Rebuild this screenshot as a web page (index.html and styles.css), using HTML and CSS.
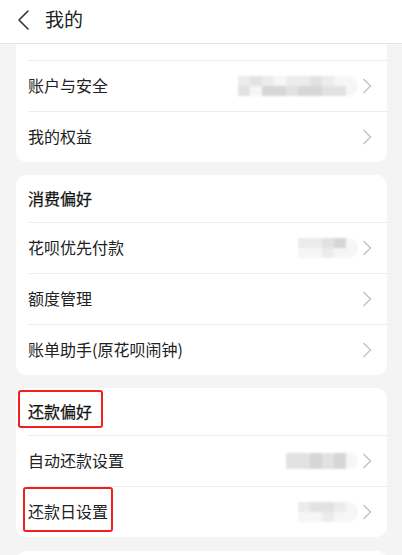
FILE: index.html
```html
<!DOCTYPE html>
<html lang="zh-CN">
<head>
<meta charset="utf-8">
<link rel="stylesheet" href="styles.css">
</head>
<body>
<div class="header">
  <svg class="back" width="14" height="22" viewBox="0 0 14 22"><polyline points="11,2 2,11 11,20" fill="none" stroke="#333" stroke-width="1.6" stroke-linecap="round" stroke-linejoin="round"/></svg>
  <span class="title">我的</span>
</div>
<div class="content">
  <div class="card card-cut">
    <div class="stub"></div>
    <div class="row"><span class="label">账户与安全</span>
      <div class="blob blob-w10"><i class="g1"></i><i class="g2"></i><i class="g1"></i><i class="g0"></i><i class="g1"></i><i class="g1"></i><i class="g2"></i><i class="g1"></i><i class="g0"></i><i class="g0"></i><i class="g2"></i><i class="g0"></i><i class="g3"></i><i class="g3"></i><i class="g2"></i><i class="g3"></i><i class="g3"></i><i class="g2"></i><i class="g2"></i><i class="g0"></i></div>
      <svg class="chev" width="10" height="16" viewBox="0 0 10 16"><polyline points="1.5,1 8.5,8 1.5,15" fill="none" stroke="#c2c2c2" stroke-width="1.4"/></svg>
    </div>
    <div class="row"><span class="label">我的权益</span>
      <svg class="chev" width="10" height="16" viewBox="0 0 10 16"><polyline points="1.5,1 8.5,8 1.5,15" fill="none" stroke="#c2c2c2" stroke-width="1.4"/></svg>
    </div>
  </div>

  <div class="card">
    <div class="row head"><span class="label">消费偏好</span></div>
    <div class="row"><span class="label">花呗优先付款</span>
      <div class="blob blob-w5"><i class="g1"></i><i class="g1"></i><i class="g2"></i><i class="g3"></i><i class="g0"></i><i class="g0"></i><i class="g0"></i><i class="g1"></i><i class="g0"></i><i class="g0"></i></div>
      <svg class="chev" width="10" height="16" viewBox="0 0 10 16"><polyline points="1.5,1 8.5,8 1.5,15" fill="none" stroke="#c2c2c2" stroke-width="1.4"/></svg>
    </div>
    <div class="row"><span class="label">额度管理</span>
      <svg class="chev" width="10" height="16" viewBox="0 0 10 16"><polyline points="1.5,1 8.5,8 1.5,15" fill="none" stroke="#c2c2c2" stroke-width="1.4"/></svg>
    </div>
    <div class="row"><span class="label">账单助手(原花呗闹钟)</span>
      <svg class="chev" width="10" height="16" viewBox="0 0 10 16"><polyline points="1.5,1 8.5,8 1.5,15" fill="none" stroke="#c2c2c2" stroke-width="1.4"/></svg>
    </div>
  </div>

  <div class="card">
    <div class="row head"><span class="label marked mark1">还款偏好</span></div>
    <div class="row"><span class="label">自动还款设置</span>
      <div class="blob blob-w6 blob-thin"><i class="g2"></i><i class="g2"></i><i class="g3"></i><i class="g2"></i><i class="g3"></i><i class="g0"></i></div>
      <svg class="chev" width="10" height="16" viewBox="0 0 10 16"><polyline points="1.5,1 8.5,8 1.5,15" fill="none" stroke="#c2c2c2" stroke-width="1.4"/></svg>
    </div>
    <div class="row"><span class="label marked mark2">还款日设置</span>
      <div class="blob blob-w5"><i class="g1"></i><i class="g2"></i><i class="g2"></i><i class="g1"></i><i class="g0"></i><i class="g0"></i><i class="g0"></i><i class="g1"></i><i class="g0"></i><i class="g0"></i></div>
      <svg class="chev" width="10" height="16" viewBox="0 0 10 16"><polyline points="1.5,1 8.5,8 1.5,15" fill="none" stroke="#c2c2c2" stroke-width="1.4"/></svg>
    </div>
  </div>

  <div class="card card-next"></div>
</div>
</body>
</html>
```
FILE: styles.css
```css
html, body {
  margin: 0;
  padding: 0;
}
body {
  width: 402px;
  height: 555px;
  overflow: hidden;
  background: #f4f4f4;
  font-family: "Noto Sans CJK SC", "Noto Sans", sans-serif;
  color: #222;
}
.header {
  height: 43px;
  background: #fff;
  border-bottom: 1px solid #e3e3e3;
  display: flex;
  align-items: center;
  padding-left: 17px;
  box-sizing: content-box;
}
.back {
  display: block;
  margin-top: -4px;
}
.title {
  font-size: 19px;
  margin-left: 14px;
  margin-top: -6px;
  line-height: 1;
}
.content {
  padding: 0 15px 0 16px;
  display: flex;
  flex-direction: column;
  gap: 13px;
}
.card {
  background: #fff;
  border-radius: 10px;
}
.card-cut {
  border-top-left-radius: 0;
  border-top-right-radius: 0;
}
.card-next {
  height: 20px;
  margin-top: 1px;
}
.stub {
  height: 16px;
}
.row {
  height: 50px;
  margin-left: 12px;
  padding-right: 15px;
  border-top: 1px solid #ececec;
  display: flex;
  align-items: center;
  position: relative;
}
.row:first-child {
  border-top: none;
}
.row.head {
  height: 47px;
}
.row.head .label {
  color: #111;
  -webkit-text-stroke: 0.25px #111;
}
.label {
  font-size: 16px;
  line-height: 1;
  flex: 1;
  position: relative;
  top: -1px;
}
.chev {
  display: block;
  flex: none;
}
.blob {
  display: grid;
  grid-auto-rows: 10px;
  margin-right: 4px;
  filter: blur(0.8px);
  border-radius: 0 10px 10px 0;
  overflow: hidden;
}
.blob i {
  display: block;
}
.blob-w10 {
  grid-template-columns: repeat(10, 12px);
}
.blob-w5 {
  grid-template-columns: repeat(5, 12px);
}
.blob-w6 {
  grid-template-columns: repeat(6, 12px);
}
.blob-thin {
  grid-auto-rows: 16px;
}
.g0 { background: #f6f6f6; }
.g1 { background: #ececec; }
.g2 { background: #e2e2e2; }
.g3 { background: #d6d6d6; }
.marked {
  flex: none;
}
.marked::after {
  content: "";
  position: absolute;
  border: 2px solid #f0201e;
  border-radius: 3px;
}
.mark1::after {
  left: -10px;
  top: -13px;
  width: 81px;
  height: 34px;
}
.mark2::after {
  left: -5px;
  top: -16px;
  width: 86px;
  height: 41px;
}
.marked + .blob, .marked + .chev {
  margin-left: auto;
}
```
